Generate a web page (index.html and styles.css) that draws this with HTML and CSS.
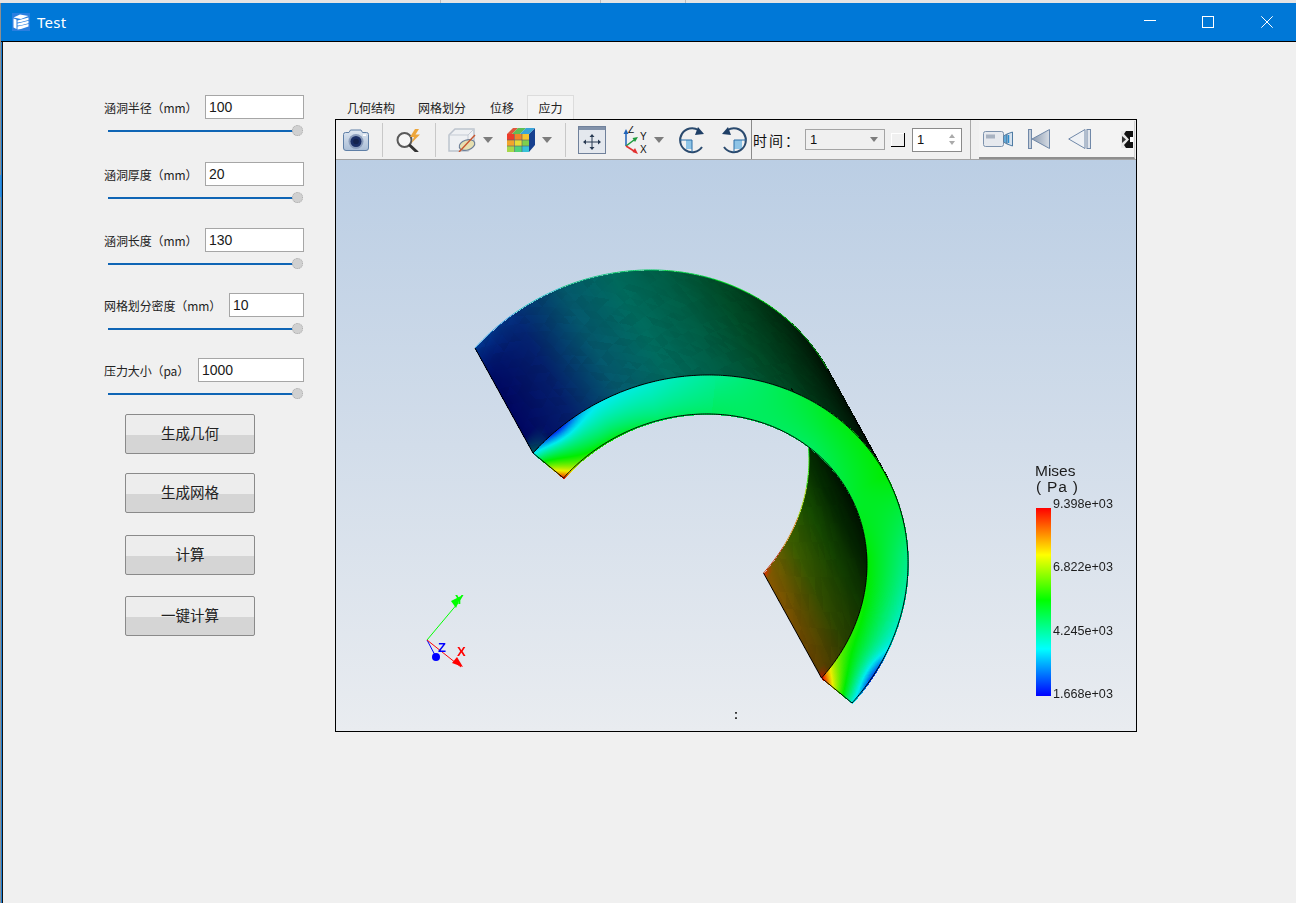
FILE: index.html
```html
<!DOCTYPE html>
<html lang="zh">
<head>
<meta charset="utf-8">
<title>Test</title>
<link rel="stylesheet" href="styles.css">
</head>
<body>
<div class="topstrip"></div>
<header class="titlebar">
  <svg class="appicon" viewBox="0 0 18 18" width="18" height="18">
    <rect width="18" height="18" fill="#2a7fe0"/>
    <path d="M1.500 4.500 L8 1.500 L16.500 3 L9 6Z" fill="#fff"/>
    <path d="M1.500 5.500 L4.500 6.500 V16 L1.500 14.500Z" fill="#fff"/>
    <path d="M5.500 7.500 L16.500 4.500 V7 L9 9 L5.500 9.500Z" fill="#fff"/>
    <path d="M5.500 10.500 L16.500 7.800 V10.300 L9 12.300 L5.500 12.500Z" fill="#fff"/>
    <path d="M5.500 13.500 L16.500 11 V13.500 L9 16 L5.500 16.500Z" fill="#fff"/>
  </svg>
  <span class="apptitle">Test</span>
  <div class="winbtns">
    <span class="winbtn"><svg width="12" height="12" viewBox="0 0 12 12"><path d="M0 4.500H12" stroke="#fff" fill="none"/></svg></span>
    <span class="winbtn"><svg width="12" height="12" viewBox="0 0 12 12"><rect x=".5" y=".5" width="11" height="11" stroke="#fff" fill="none"/></svg></span>
    <span class="winbtn"><svg width="12" height="12" viewBox="0 0 12 12"><path d="M.3 .3L11.700 11.700M11.700 .3L.3 11.700" stroke="#fff" fill="none"/></svg></span>
  </div>
</header>

<main class="client">
  <section class="panel">
    <div class="form">
      <div class="field">
        <div class="fieldrow"><span class="label">涵洞半径（mm）</span><div class="input w99">100</div></div>
        <div class="slider"><i class="handle"></i></div>
      </div>
      <div class="field">
        <div class="fieldrow"><span class="label">涵洞厚度（mm）</span><div class="input w99">20</div></div>
        <div class="slider"><i class="handle"></i></div>
      </div>
      <div class="field">
        <div class="fieldrow"><span class="label">涵洞长度（mm）</span><div class="input w99">130</div></div>
        <div class="slider"><i class="handle"></i></div>
      </div>
      <div class="field">
        <div class="fieldrow"><span class="label">网格划分密度（mm）</span><div class="input w75">10</div></div>
        <div class="slider"><i class="handle"></i></div>
      </div>
      <div class="field">
        <div class="fieldrow"><span class="label">压力大小（pa）</span><div class="input w106">1000</div></div>
        <div class="slider"><i class="handle"></i></div>
      </div>
    </div>
    <div class="actions">
      <button class="btn">生成几何</button>
      <button class="btn">生成网格</button>
      <button class="btn">计算</button>
      <button class="btn">一键计算</button>
    </div>
  </section>

  <section class="viewer">
    <nav class="tabs">
      <span class="tab t1">几何结构</span>
      <span class="tab t2">网格划分</span>
      <span class="tab t3">位移</span>
      <span class="tab active">应力</span>
    </nav>
    <div class="frame">
      <div class="toolbar">
        <svg class="ic camera" width="28" height="24" viewBox="0 0 28 24">
          <defs><linearGradient id="cam" x1="0" y1="0" x2="0" y2="1"><stop offset="0" stop-color="#dfe7f1"/><stop offset="1" stop-color="#a9bdd6"/></linearGradient></defs>
          <path d="M1.500 6.500 Q1.500 4.500 3.500 4.500 H7 L8.500 2 H19 L20.500 4.500 H24.500 Q26.500 4.500 26.500 6.500 V20 Q26.500 22.500 24 22.500 H4 Q1.500 22.500 1.500 20Z" fill="url(#cam)" stroke="#5f7fa6"/>
          <circle cx="14" cy="13.500" r="7.500" fill="#8b9dbc"/>
          <circle cx="14" cy="13.500" r="5.500" fill="#1b2f66"/>
          <circle cx="14" cy="13.500" r="2.800" fill="#14234d"/>
          <rect x="21" y="6.500" width="3" height="1.500" fill="#fff"/>
        </svg>
        <i class="sep s1"></i>
        <svg class="ic mag" width="28" height="24" viewBox="0 0 28 24">
          <circle cx="9.500" cy="12" r="7" fill="#f6f6f6" stroke="#5a5a5a" stroke-width="2"/>
          <path d="M15 17.500 L22 24" stroke="#333" stroke-width="3" stroke-linecap="round"/>
          <path d="M20 1 L15 9 H19 L16.500 15 L25 6.500 H20.500 L24 1Z" fill="#eda63c"/>
        </svg>
        <i class="sep s2"></i>
        <svg class="ic box" width="29" height="24" viewBox="0 0 29 24">
          <path d="M1 7 L7 1 H26 V17 L20 23 H1Z" fill="#eef0f3" stroke="#bcc3cd" stroke-width="1.500"/>
          <path d="M1 7 H20 V23 M20 7 L26 1" fill="none" stroke="#c5cbd4"/>
          <ellipse cx="19" cy="17" rx="8" ry="5" fill="#e6dfb0" stroke="#6d7f98" stroke-width="1.200" transform="rotate(-18 19 17)"/>
          <path d="M11 24 L27 7" stroke="#c8552e" stroke-width="1.400"/>
        </svg>
        <i class="drop d1"></i>
        <svg class="ic cube" width="28" height="24" viewBox="0 0 28 24">
          <path d="M22 6 L28 0 V17 L22 24Z" fill="#17408f"/>
          <path d="M6 0 H11 L5 6 H0Z" fill="#e0573c"/><path d="M11 0 H19 L13 6 H5Z" fill="#5fbf55"/><path d="M19 0 H28 L22 6 H13Z" fill="#39a4d8"/>
          <rect x="0" y="6" width="7.500" height="6" fill="#ee3b2a"/><rect x="7.500" y="6" width="7.500" height="6" fill="#f0852a"/><rect x="15" y="6" width="7" height="6" fill="#f5c530"/>
          <rect x="0" y="12" width="7.500" height="6" fill="#f2a52b"/><rect x="7.500" y="12" width="7.500" height="6" fill="#e6dc38"/><rect x="15" y="12" width="7" height="6" fill="#7fcf4d"/>
          <rect x="0" y="18" width="7.500" height="6" fill="#a6d84a"/><rect x="7.500" y="18" width="7.500" height="6" fill="#4fd37a"/><rect x="15" y="18" width="7" height="6" fill="#38c2d8"/>
          <path d="M7.500 6V24M15 6V24M0 12H22M0 18H22" stroke="#54606e" stroke-width=".6"/>
        </svg>
        <i class="drop d2"></i>
        <i class="sep s3"></i>
        <svg class="ic fit" width="28" height="28" viewBox="0 0 28 28">
          <rect x=".5" y=".5" width="27" height="27" fill="#e4e8ee" stroke="#70819b"/>
          <rect x="1" y="1" width="26" height="3" fill="#8292aa"/>
          <path d="M14 8 L11.500 11 H16.500Z M14 24 L11.500 21 H16.500Z M5 16 L8 13.500 V18.500Z M23 16 L20 13.500 V18.500Z" fill="#283a52"/>
          <path d="M14 10V22M7 16H21" stroke="#283a52"/>
        </svg>
        <svg class="ic axes" width="26" height="28" viewBox="0 0 26 28">
          <path d="M4 20 V7" stroke="#1f62b8" stroke-width="1.500"/><path d="M4 3 L1.500 8 H6.500Z" fill="#1f62b8"/>
          <path d="M4 20 L12 14" stroke="#1c9a3c" stroke-width="1.500"/><path d="M16 11 L10.500 12 L13 16Z" fill="#1c9a3c"/>
          <path d="M4 20 L12 25" stroke="#e23030" stroke-width="1.500"/><path d="M16 28 L13 22 L10.500 26Z" fill="#e23030"/>
          <text x="6" y="7" class="axt">Z</text><text x="18" y="14" class="axt">Y</text><text x="18" y="27" class="axt">X</text>
        </svg>
        <i class="drop d3"></i>
        <svg class="ic rot1" width="28" height="28" viewBox="0 0 28 28">
          <rect x="8" y="14" width="6" height="9" fill="#8ec4e6"/>
          <path d="M24 21 A12 12 0 1 1 20.500 4" fill="none" stroke="#2a4a6e" stroke-width="2"/>
          <path d="M26 8 L17 9 L20 1Z" fill="#1f3f66"/>
          <path d="M2 14 H14 V26" fill="none" stroke="#2a6fa8"/>
        </svg>
        <svg class="ic rot2" width="28" height="28" viewBox="0 0 28 28">
          <rect x="14" y="14" width="8" height="9" fill="#8ec4e6"/>
          <path d="M4 21 A12 12 0 1 0 7.500 4" fill="none" stroke="#2a4a6e" stroke-width="2"/>
          <path d="M2 8 L11 9 L8 1Z" fill="#1f3f66"/>
          <path d="M26 14 H14 V26" fill="none" stroke="#2a6fa8"/>
        </svg>
        <i class="sep s4"></i>
        <span class="timelabel">时间：</span>
        <div class="combo"><span>1</span><i class="drop d4"></i></div>
        <i class="check"></i>
        <div class="spin"><span>1</span><span class="arrows"><i class="up"></i><i class="down"></i></span></div>
        <i class="sep s5"></i>
        <div class="toolbar2">
          <svg class="ic film" width="30" height="16" viewBox="0 0 30 16">
            <rect x=".5" y=".5" width="20" height="15" rx="2" fill="#e6e9ee" stroke="#7d92ad"/>
            <rect x="3" y="3.500" width="9" height="4" fill="#a7b2c1"/>
            <path d="M20.500 5 L24 3 V13 L20.500 11Z" fill="#5fa9d9" stroke="#5f7f9f"/>
            <path d="M24 3 L29.500 1 V15 L24 13Z" fill="#d6e2ee" stroke="#4e7ba3"/>
            <path d="M25.500 4 V12" stroke="#2d8ccb" stroke-width="1.500"/>
          </svg>
          <svg class="ic first" width="22" height="20" viewBox="0 0 22 20">
            <defs><linearGradient id="tri" x1="0" y1="0" x2="1" y2="0"><stop offset="0" stop-color="#8c9bb0"/><stop offset="1" stop-color="#d6dce4"/></linearGradient></defs>
            <rect x=".5" y=".5" width="3" height="19" fill="#c5ced9" stroke="#7088a8"/>
            <path d="M4 10 L21.500 .5 V19.500Z" fill="url(#tri)" stroke="#7088a8"/>
          </svg>
          <svg class="ic prev" width="23" height="20" viewBox="0 0 23 20">
            <path d="M.7 10 L17 .5 V19.500Z" fill="#eef1f5" stroke="#7088a8"/>
            <rect x="19" y=".5" width="3.500" height="19" fill="#e0e5ec" stroke="#7088a8"/>
          </svg>
          <svg class="ic next" width="12" height="17" viewBox="0 0 12 17">
            <rect width="12" height="17" fill="#111"/>
            <path d="M0 0 H5 L3 3 L8 8.500 L3 14 L5 17 H0Z" fill="#e8e8e8"/>
            <path d="M1 5 L5 8.500 L1 12Z" fill="#333"/>
            <path d="M9 6 H12 V11 H9Z" fill="#fff"/>
          </svg>
        </div>
      </div>
      <div class="viewport">
        <canvas id="mesh" class="layer" width="800" height="571"></canvas>
        <svg class="layer" width="800" height="571" viewBox="0 0 800 571">
          <path d="M91 480 L122 443" stroke="#00ff00"/>
          <path d="M115 441 L125 436 L120 448Z" fill="#00ff00"/>
          <path d="M91 480 L100 497" stroke="#0000ff"/>
          <circle cx="100" cy="497" r="4" fill="#0000ff"/>
          <path d="M91 480 L125 507" stroke="#ff0000"/>
          <path d="M116 503 L121 497 L127 507Z" fill="#ff0000"/>
          <text x="119" y="444" class="ax ax-y">Y</text>
          <text x="102" y="492" class="ax ax-z">Z</text>
          <text x="121" y="496" class="ax ax-x">X</text>
        </svg>
        <span class="colon">:</span>
        <div class="legend">
          <div class="legend-title">Mises<br><span class="unit">( Pa )</span></div>
          <div class="legend-body">
            <div class="bar"></div>
            <div class="ticks"><span>9.398e+03</span><span>6.822e+03</span><span>4.245e+03</span><span>1.668e+03</span></div>
          </div>
        </div>
      </div>
    </div>
  </section>
</main>
<script src="mesh.js"></script>
</body>
</html>
```

FILE: styles.css
```css
* { box-sizing: border-box; }
html, body { margin: 0; height: 100%; overflow: hidden; }
body {
  width: 1296px; height: 903px;
  background:
    linear-gradient(#2f8fe0, #2f8fe0) 0 175px / 1px 22px no-repeat,
    linear-gradient(#8f8f8f, #8f8f8f) 0 0 / 1px 100% no-repeat,
    #f0f0f0;
  font-family: "Noto Sans CJK SC", "Liberation Sans", sans-serif;
  color: #111;
  display: flex; flex-direction: column;
}
.topstrip {
  height: 3px; flex: none;
  background:
    linear-gradient(#bbb, #bbb) 440px 0 / 1px 3px no-repeat,
    linear-gradient(#bbb, #bbb) 600px 0 / 1px 3px no-repeat,
    linear-gradient(#bbb, #bbb) 685px 0 / 1px 3px no-repeat,
    #e4e4e4;
}
.titlebar {
  height: 39px; flex: none;
  margin-left: 1px;
  background: #0078d7;
  border-bottom: 1px solid #000;
  display: flex; align-items: center;
  padding-left: 11px;
  color: #fff;
}
.appicon { flex: none; }
.apptitle { margin-left: 7px; font: 15px "Noto Sans", sans-serif; letter-spacing: .3px; }
.winbtns { margin-left: auto; display: flex; }
.winbtn { width: 58px; height: 38px; display: flex; align-items: center; justify-content: center; }
.winbtn:last-child { width: 59px; }

.client {
  flex: 1; display: flex;
  margin-left: 1px;
  border-left: 1px solid #1c7fd6;
  box-shadow: inset 1px 0 0 #111;
  background: #f0f0f0;
  padding-top: 53px;
}
.panel { width: 333px; flex: none; padding-left: 102px; }
.form { display: grid; width: 200px; grid-template-rows: 67px 66px 65px 65px 56px; }
.fieldrow { display: flex; justify-content: space-between; align-items: center; height: 24px; }
.label { font-size: 12px; letter-spacing: -.12px; color: #222; white-space: nowrap; }
.input {
  height: 24px; border: 1px solid #a6a6a6; background: #fff;
  font: 14px/22px "Liberation Sans", sans-serif; padding-left: 3px; color: #1a1a1a;
}
.w99 { width: 99px; } .w75 { width: 75px; } .w106 { width: 106px; }
.slider { position: relative; height: 2px; margin: 11px 7px 0 4px; background: #0f65b5; }
.handle {
  position: absolute; right: -6px; top: -5px;
  width: 11px; height: 11px; border-radius: 50%;
  background: #d0d0d0; border: 1px dotted #aaa;
}
.actions { display: grid; grid-template-rows: 59px 62px 61px 40px; margin-left: 21px; }
.btn {
  width: 130px; height: 40px; padding: 0 0 4px;
  border: 1px solid #8a8a8a; border-radius: 2px;
  background: linear-gradient(#ededed 52%, #d5d5d5 52%);
  font: 14.5px "Noto Sans CJK SC", sans-serif; color: #222;
}

.viewer { width: 802px; flex: none; display: flex; flex-direction: column; }
.tabs { display: flex; height: 24px; align-items: stretch; margin-left: 1px; font-size: 12px; }
.tab { padding: 0 11px; display: flex; align-items: center; justify-content: center; color: #222; }
.t2 { margin-left: 1px; } .t3 { margin-left: 2px; }
.tab.active { width: 47px; padding: 0; margin-left: 2px; border: 1px solid #dcdcdc; border-bottom: none; background: #f4f4f4; }
.frame { width: 802px; height: 613px; border: 1px solid #000; display: flex; flex-direction: column; }
.toolbar {
  height: 40px; flex: none; display: flex; align-items: center;
  background: #f0f0f0; border-bottom: 1px solid #a4a4a4; padding-left: 6px;
}
.ic { flex: none; display: block; }
.sep { flex: none; width: 1px; height: 34px; background: #c8c8c8; }
.s1 { margin-left: 12px; } .mag { margin-left: 12px; }
.s2 { margin-left: 12px; } .box { margin-left: 12px; }
.drop { flex: none; width: 0; height: 0; border: 5px solid transparent; border-top: 6px solid #7d7d7d; border-bottom: none; }
.d1 { margin-left: 6px; } .cube { margin-left: 14px; } .d2 { margin-left: 7px; }
.s3 { margin-left: 13px; } .fit { margin-left: 12px; } .axes { margin-left: 16px; }
.d3 { margin-left: 6px; } .rot1 { margin-left: 14px; } .rot2 { margin-left: 14px; }
.s4 { margin-left: 3px; height: 39px; align-self: flex-start; background: #8a8a8a; }
.axt { font: 10px "Liberation Sans", sans-serif; fill: #111; }
.timelabel { margin-left: 1px; width: 52px; font-size: 14px; letter-spacing: 2px; white-space: nowrap; }
.combo {
  flex: none; width: 80px; height: 21px; border: 1px solid #a4a4a4; background: #f0f0f0;
  display: flex; align-items: center; justify-content: space-between; padding: 0 6px 0 4px;
  font: 13px "Liberation Sans", sans-serif;
}
.d4 { border-width: 4px; border-top-width: 5px; border-bottom: none; }
.check {
  flex: none; width: 14px; height: 14px; margin-left: 6px;
  border-right: 1px solid #000; border-bottom: 1px solid #000;
  box-shadow: inset 1px 1px 0 #fff;
}
.spin {
  flex: none; width: 50px; height: 24px; margin-left: 7px; border: 1px solid #8a8a8a; background: #fff;
  display: flex; align-items: center; justify-content: space-between; padding: 0 6px 0 4px;
  font: 13px "Liberation Sans", sans-serif;
}
.arrows { display: flex; flex-direction: column; gap: 3px; }
.arrows i { display: block; width: 0; height: 0; border: 3px solid transparent; }
.arrows .up { border-bottom: 4px solid #aaa; border-top: none; }
.arrows .down { border-top: 4px solid #aaa; border-bottom: none; }
.s5 { margin-left: 8px; height: 39px; align-self: flex-start; background: #a8a8a8; }
.toolbar2 {
  margin-left: 8px; flex: none; width: 156px; height: 38px; align-self: flex-start; margin-top: 1px;
  display: flex; align-items: center; background: #f3f3f3;
  border-bottom: 2px solid #8e8e8e; border-right: 1px solid #d0d0d0; padding-left: 4px;
}
.first { margin-left: 15px; } .prev { margin-left: 18px; } .next { margin-left: 30px; }

.viewport {
  position: relative; flex: 1;
  background: linear-gradient(#bbcee4, #e9ecf0);
}
.layer { position: absolute; left: 0; top: 0; display: block; }
.ax { font: bold 13px "Liberation Sans", sans-serif; }
.ax-y { fill: #00ff00; } .ax-z { fill: #0000ff; } .ax-x { fill: #ff0000; }
.colon { position: absolute; left: 398px; top: 548px; font: bold 12px "Liberation Sans", sans-serif; color: #111; }
.legend { position: absolute; left: 699px; top: 303px; font-family: "Liberation Sans", sans-serif; color: #1c1c1c; }
.legend-title { font-size: 15.5px; line-height: 16px; }
.unit { letter-spacing: .8px; margin-left: 1px; }
.legend-body { display: flex; margin-top: 13px; height: 188px; margin-left: 1px; }
.bar { width: 15px; height: 188px; background: linear-gradient(#ff0000, #ffff00 25%, #00ff00 49%, #00ffff 75%, #0000ff); }
.ticks {
  display: flex; flex-direction: column; justify-content: space-between;
  margin: -11px 0 -6px 2px; font-size: 12.6px; line-height: 15px;
}
```

FILE: mesh.js
```js
// Paints the stress field of the half-ring culvert section onto the viewport canvas.
(function () {
  var cv = document.getElementById('mesh');
  var ctx = cv.getContext('2d');
  var W = cv.width, H = cv.height;
  var SX = -58, SY = -105;            // extrusion vector of the section
  var TAN = 0.618;                    // silhouette parameter
  var OX = 692.5 - 336, OY = 578 - 160;
  function ring(k) {                  // k: 0 inner .. 1 outer
    var ax = 129 + 30.5 * k, ay = 100 + 25 * k, bx = 117.5 + 27.5 * k, by = -130 - 30 * k;
    return function (T) {
      var th = Math.PI * (1 - T), c = Math.cos(th), n = Math.sin(th);
      return [OX + ax * c + bx * n, OY + ay * c + by * n];
    };
  }
  var OUT = ring(1), INN = ring(0);

  function lerpTable(tb, x) {
    if (x <= tb[0][0]) return tb[0][1];
    for (var i = 1; i < tb.length; i++) {
      if (x <= tb[i][0]) {
        var a = tb[i - 1], b = tb[i], f = (x - a[0]) / (b[0] - a[0]);
        return a[1] + (b[1] - a[1]) * f;
      }
    }
    return tb[tb.length - 1][1];
  }
  function jet(v) {
    v = Math.max(0, Math.min(1, v));
    var x = v * 4, i = Math.min(3, Math.floor(x)), f = x - i;
    var S = [[0,0,255],[0,255,255],[0,255,0],[255,255,0],[255,0,0]];
    var a = S[i], b = S[i + 1], L = 0.93;
    return [(a[0] + (b[0] - a[0]) * f) * L, (a[1] + (b[1] - a[1]) * f) * L, (a[2] + (b[2] - a[2]) * f) * L];
  }
  function ramp(st, t) {
    if (t <= 0) return st[0];
    if (t >= st.length - 1) return st[st.length - 1];
    var i = Math.floor(t), f = t - i, a = st[i], b = st[i + 1];
    return [a[0] + (b[0] - a[0]) * f, a[1] + (b[1] - a[1]) * f, a[2] + (b[2] - a[2]) * f];
  }
  function put(D, p, c) {
    var x = Math.round(p[0]), y = Math.round(p[1]);
    if (x < 0 || y < 0 || x >= W || y >= H) return;
    var o = (y * W + x) * 4;
    D[o] = c[0]; D[o + 1] = c[1]; D[o + 2] = c[2]; D[o + 3] = 255;
  }
  function facet(t, v) {
    var a = t * 70 + v * 3, b = v * 10 - t * 28;
    var fa = a - Math.floor(a), fb = b - Math.floor(b);
    var k = Math.floor(a) * 12.9 + Math.floor(b) * 78.2 + (fa + fb > 1 ? 37 : 0);
    var n = Math.sin(k) * 43758.5; n -= Math.floor(n);
    return 1 + (n - 0.5) * 0.08;
  }
  var img = ctx.createImageData(W, H), D = img.data;
  var T, v, s;

  // Outer (top) surface.
  var TOP = [[0,5,95],[4,30,105],[4,86,106],[0,105,92],[0,92,68],[0,75,40],[0,50,20],[0,28,8],[0,12,2]];
  for (T = 0; T <= TAN + 0.004; T += 0.0006) {
    var o = OUT(T), i0 = T / TAN * 8, c = ramp(TOP, i0);
    for (v = 0; v <= 1; v += 0.004) {
      var m = facet(T, v);
      var teal = Math.pow(v, 6) * Math.max(0, 1.6 - i0) * 30;
      var tip = Math.max(0, 1 - i0 / 0.45) * Math.max(0, 1 - v / 0.15) * 90;
      put(D, [o[0] + SX * v, o[1] + SY * v], [c[0] * m, (c[1] + teal + tip) * m, (c[2] + teal) * m]);
    }
  }
  // Inner surface, lower right.
  var INS = [[0,14,0],[0,26,0],[3,42,0],[18,72,0],[48,86,0],[112,84,0]];
  for (T = TAN; T <= 1; T += 0.0006) {
    var q = INN(T), ii = (T - TAN) / (1 - TAN) * 5, ci = ramp(INS, ii);
    for (v = 0; v <= 1; v += 0.004) {
      var mm = facet(T, v * 0.6);
      var rr = ci[0] * (0.8 + 0.45 * v), gg = ci[1] * (0.72 + 0.35 * v);
      var hot = Math.max(0, 1 - (1 - T) / 0.02);
      var near = Math.max(0, 1 - v / 0.08) * hot, far = Math.max(0, 1 - (1 - v) / 0.05) * hot;
      rr += (near + far) * 90; gg -= (near + far) * 40;
      put(D, [q[0] + SX * v, q[1] + SY * v], [rr * mm, Math.max(0, gg) * mm, 0]);
    }
  }
  ctx.putImageData(img, 0, 0);

  function line(F, from, to, dx, dy) {
    var n = Math.max(2, Math.round((to - from) * 300));
    for (var i = 0; i <= n; i++) {
      var p = F(from + (to - from) * i / n);
      if (i === 0) ctx.moveTo(p[0] + dx, p[1] + dy); else ctx.lineTo(p[0] + dx, p[1] + dy);
    }
  }
  // Coloured silhouettes of the back edge.
  ctx.lineWidth = 1;
  var stops = ['#2fa0e0', '#20c0c0', '#10c080', '#00c860', '#00d040', '#00e020', '#00e010', '#00b010'];
  var u;
  for (u = 0; u < 8; u++) {
    ctx.beginPath(); ctx.strokeStyle = stops[u];
    line(OUT, u / 8 * TAN, (u + 1) / 8 * TAN, SX, SY); ctx.stroke();
  }
  var edge = ['#00e000', '#30e000', '#a0d000', '#d08000', '#c03000'];
  for (u = 0; u < 5; u++) {
    ctx.beginPath(); ctx.strokeStyle = edge[u];
    line(INN, 0.70 + u * 0.06, 0.70 + (u + 1) * 0.06, SX, SY); ctx.stroke();
  }
  // Black edges of the surfaces.
  ctx.strokeStyle = '#000';
  ctx.beginPath();
  var a0 = OUT(0), i1 = INN(1), tn = OUT(TAN);
  ctx.moveTo(a0[0], a0[1]); ctx.lineTo(a0[0] + SX, a0[1] + SY);
  ctx.moveTo(i1[0], i1[1]); ctx.lineTo(i1[0] + SX, i1[1] + SY);
  ctx.moveTo(tn[0], tn[1]); ctx.lineTo(tn[0] + SX * 0.55, tn[1] + SY * 0.55);
  ctx.stroke();

  // Front face on its own layer, so that it hides whatever lies behind it.
  function field(tn, s) {
    var d = Math.min(tn, 1 - tn);
    var s0 = lerpTable([[0.12,0.5],[0.2,0.42],[0.35,0.40],[0.5,0.40],[0.75,0.5],[0.9,0.52]], tn);
    var s1 = lerpTable([[0.1,0.24],[0.2,0.28],[0.35,0.38],[0.5,0.48],[0.62,0.5],[0.75,0.36],[0.85,0.3],[0.93,0.25]], tn);
    var sk = tn < 0.3 ? Math.pow(s, 0.6) : s;
    var mid = s0 + (s1 - s0) * sk;
    var end = 1 - 0.73 * s;
    var val = mid + (end - mid) * Math.exp(-d / 0.03);
    var g = (d - 0.05) / 0.035;
    return val - Math.exp(-g * g) * Math.pow(s, 4) * 0.2;
  }
  var layer = document.createElement('canvas');
  layer.width = W; layer.height = H;
  var lc = layer.getContext('2d');
  var img2 = lc.createImageData(W, H), E = img2.data;
  for (T = 0; T <= 1; T += 0.0004) {
    var a = INN(T), b = OUT(T);
    for (s = 0; s <= 1; s += 0.004) {
      put(E, [a[0] + (b[0] - a[0]) * s, a[1] + (b[1] - a[1]) * s], jet(field(T, s)));
    }
  }
  lc.putImageData(img2, 0, 0);
  ctx.drawImage(layer, 0, 0);

  ctx.strokeStyle = '#000';
  ctx.beginPath();
  line(OUT, 0, 1, 0, 0);
  var e = INN(1); ctx.lineTo(e[0], e[1]);
  for (var i = 300; i >= 0; i--) { var p = INN(i / 300); ctx.lineTo(p[0], p[1]); }
  ctx.closePath();
  ctx.stroke();
})();
```
